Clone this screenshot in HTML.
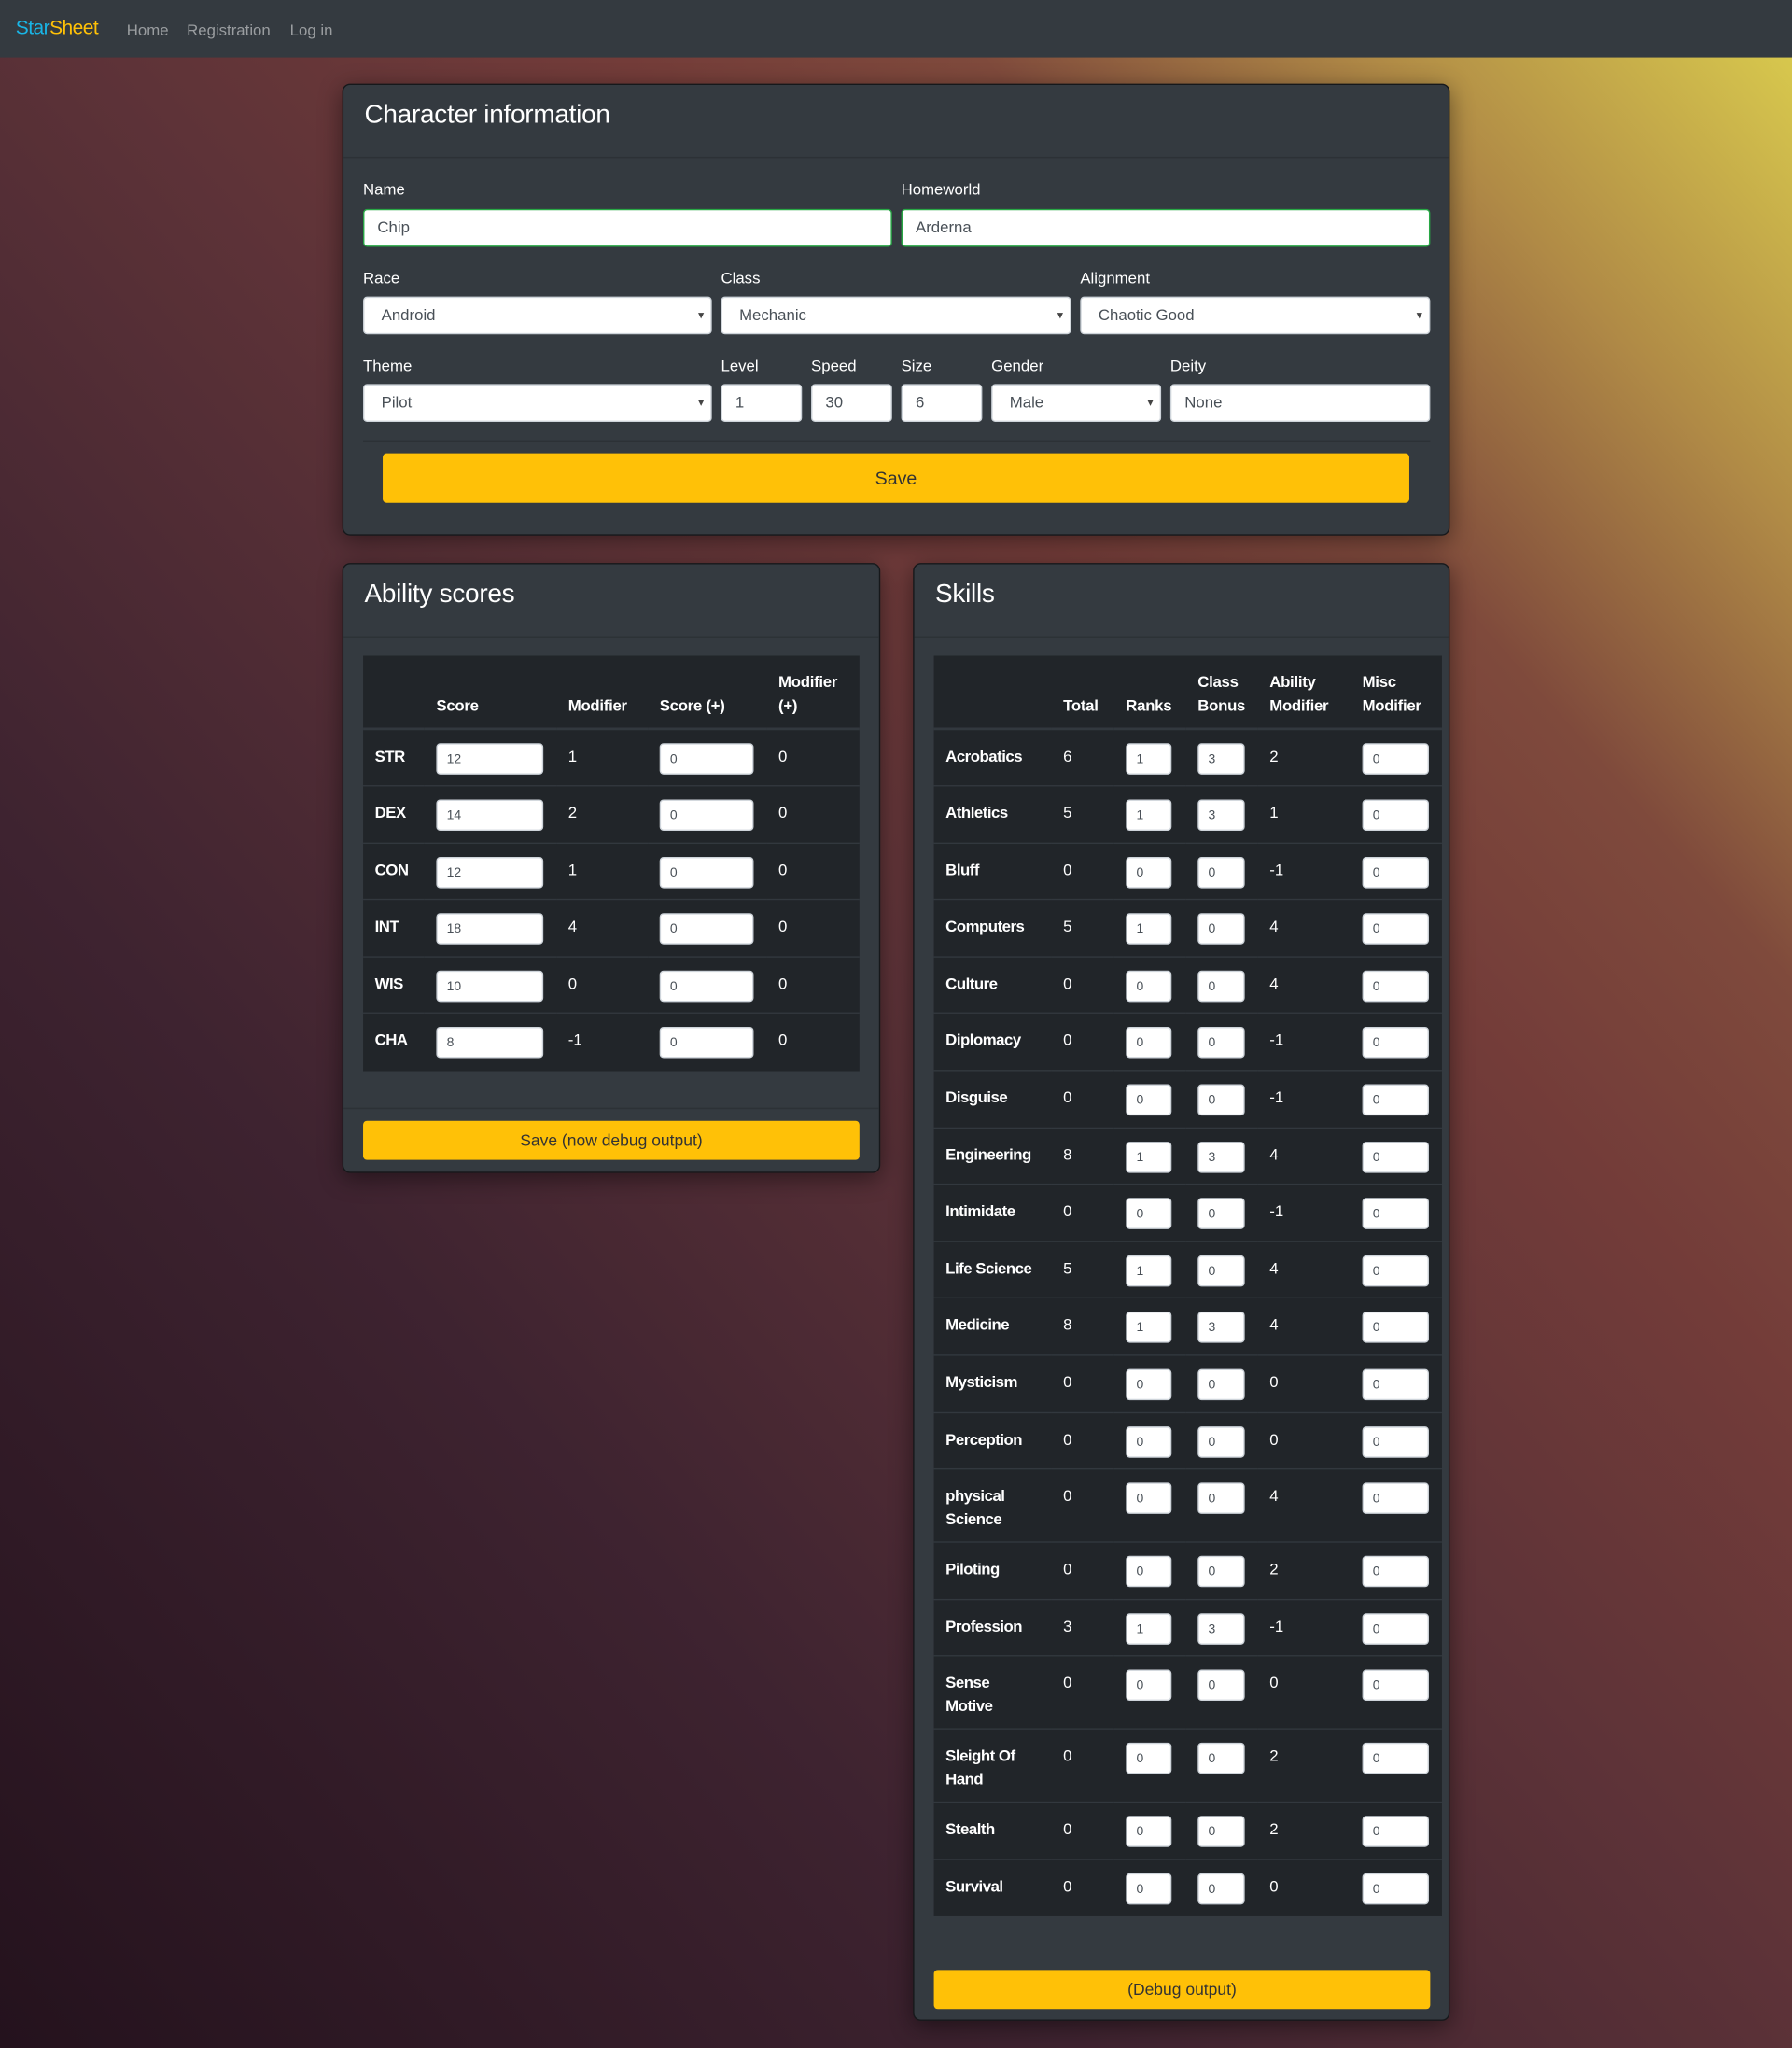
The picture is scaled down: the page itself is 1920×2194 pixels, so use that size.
<!DOCTYPE html>
<html><head><meta charset="utf-8">
<style>
html,body{margin:0;padding:0;width:1920px;height:2194px;overflow:hidden}
body{background:linear-gradient(to top right,#24121d 0%,#3e2330 30%,#5e3338 52%,#733c39 66%,#7f4a3c 76%,#b08a46 87%,#dccf4e 100%);font-family:"Liberation Sans",sans-serif}
#w{position:absolute;left:0;top:0;width:1372px;height:1568px;transform:scale(1.39942);transform-origin:0 0}
.nav{position:absolute;left:0;top:0;width:1372px;height:44px;background:#343a40}
.brand{position:absolute;left:12px;top:13px;font-size:15px;letter-spacing:-.4px}
.nl{position:absolute;top:16px;font-size:12px;color:#9a9da0}
.card{position:absolute;background:#343a40;border:1px solid #16181b;border-radius:6px;box-shadow:0 4px 18px rgba(0,0,0,.45)}
.ch{height:55px;border-bottom:1px solid #2c3136;position:relative}
.ch h2{position:absolute;left:16px;top:12px;margin:0;font-size:20px;font-weight:normal;color:#fff;letter-spacing:-.2px}
.lab{position:absolute;font-size:12px;color:#fff}
.in{position:absolute;box-sizing:border-box;background:#fff;border:1px solid #ced4da;border-radius:3px;font-size:12px;color:#495057;padding-left:10px;line-height:27px;height:29px}
.g{border-color:#28a745}
.sel{padding-left:13px}
.sel:after{content:"▾";position:absolute;right:5px;top:0;font-size:9px;color:#444}
.btn{position:absolute;background:#ffc107;border-radius:3px;color:#333;text-align:center}
table{border-collapse:collapse;table-layout:fixed;background:#212529;color:#fff;position:absolute;font-size:12px}
th{font-weight:bold;text-align:left;vertical-align:bottom;padding:0 9px 8px;line-height:18px;border-bottom:2px solid #32383e;height:46px;box-sizing:border-box;letter-spacing:-.2px}
td{vertical-align:top;padding:11px 9px 0;line-height:18px;border-top:1px solid #32383e}
td.n{font-weight:bold;padding-top:11px;letter-spacing:-.35px;padding-right:4px}
tbody tr{height:43.6px}
tbody tr.t{height:56px}
.i{display:block;box-sizing:border-box;height:24px;background:#fff;border:1px solid #ced4da;border-radius:3px;font-size:10px;color:#495057;padding-left:7px;line-height:24px;margin-top:-1px}
</style></head><body><div id="w">
<div class="nav">
<div class="brand"><span style="color:#19b5e6">Star</span><span style="color:#ffc107">Sheet</span></div>
<div class="nl" style="left:97px">Home</div><div class="nl" style="left:143px">Registration</div><div class="nl" style="left:222px">Log in</div>
</div>

<div class="card" style="left:262px;top:64px;width:846px;height:344px">
<div class="ch"><h2>Character information</h2></div>
<div class="lab" style="left:15px;top:73px">Name</div>
<div class="lab" style="left:427px;top:73px">Homeworld</div>
<div class="in g" style="left:15px;top:95px;width:405px">Chip</div>
<div class="in g" style="left:427px;top:95px;width:405px">Arderna</div>
<div class="lab" style="left:15px;top:141px">Race</div>
<div class="lab" style="left:289px;top:141px">Class</div>
<div class="lab" style="left:564px;top:141px">Alignment</div>
<div class="in sel" style="left:15px;top:162px;width:267px">Android</div>
<div class="in sel" style="left:289px;top:162px;width:268px">Mechanic</div>
<div class="in sel" style="left:564px;top:162px;width:268px">Chaotic Good</div>
<div class="lab" style="left:15px;top:208px">Theme</div>
<div class="lab" style="left:289px;top:208px">Level</div>
<div class="lab" style="left:358px;top:208px">Speed</div>
<div class="lab" style="left:427px;top:208px">Size</div>
<div class="lab" style="left:496px;top:208px">Gender</div>
<div class="lab" style="left:633px;top:208px">Deity</div>
<div class="in sel" style="left:15px;top:229px;width:267px">Pilot</div>
<div class="in" style="left:289px;top:229px;width:62px">1</div>
<div class="in" style="left:358px;top:229px;width:62px">30</div>
<div class="in" style="left:427px;top:229px;width:62px">6</div>
<div class="in sel" style="left:496px;top:229px;width:130px">Male</div>
<div class="in" style="left:633px;top:229px;width:199px">None</div>
<div style="position:absolute;left:15px;top:272px;width:817px;height:57px;border-top:1px solid #2c3136;background:#343a40"></div>
<div class="btn" style="left:30px;top:282px;width:786px;height:38px;line-height:38px;font-size:14px">Save</div>
</div>

<div class="card" style="left:262px;top:431px;width:410px;height:465px">
<div class="ch"><h2>Ability scores</h2></div>
<table style="left:15px;top:70px;width:380px">
<colgroup><col style="width:47px"><col style="width:101px"><col style="width:70px"><col style="width:91px"><col style="width:71px"></colgroup>
<thead><tr><th style="height:56px"></th><th>Score</th><th>Modifier</th><th>Score (+)</th><th>Modifier (+)</th></tr></thead>
<tbody>
<tr><td class="n">STR</td><td><span class="i" style="width:82px">12</span></td><td>1</td><td><span class="i" style="width:72px">0</span></td><td>0</td></tr>
<tr><td class="n">DEX</td><td><span class="i" style="width:82px">14</span></td><td>2</td><td><span class="i" style="width:72px">0</span></td><td>0</td></tr>
<tr><td class="n">CON</td><td><span class="i" style="width:82px">12</span></td><td>1</td><td><span class="i" style="width:72px">0</span></td><td>0</td></tr>
<tr><td class="n">INT</td><td><span class="i" style="width:82px">18</span></td><td>4</td><td><span class="i" style="width:72px">0</span></td><td>0</td></tr>
<tr><td class="n">WIS</td><td><span class="i" style="width:82px">10</span></td><td>0</td><td><span class="i" style="width:72px">0</span></td><td>0</td></tr>
<tr><td class="n">CHA</td><td><span class="i" style="width:82px">8</span></td><td>-1</td><td><span class="i" style="width:72px">0</span></td><td>0</td></tr>
</tbody></table>
<div style="position:absolute;left:0;top:416px;width:410px;border-top:1px solid #2c3136"></div>
<div class="btn" style="left:15px;top:426px;width:380px;height:30px;line-height:30px;font-size:12.5px">Save (now debug output)</div>
</div>

<div class="card" style="left:699px;top:431px;width:409px;height:1114px">
<div class="ch"><h2>Skills</h2></div>
<table style="left:15px;top:70px;width:389px">
<colgroup><col style="width:90px"><col style="width:48px"><col style="width:55px"><col style="width:55px"><col style="width:71px"><col style="width:70px"></colgroup>
<thead><tr><th style="height:56px"></th><th>Total</th><th>Ranks</th><th>Class Bonus</th><th>Ability Modifier</th><th>Misc Modifier</th></tr></thead>
<tbody>
<tr><td class="n">Acrobatics</td><td>6</td><td><span class="i" style="width:35px">1</span></td><td><span class="i" style="width:36px">3</span></td><td>2</td><td><span class="i" style="width:51px">0</span></td></tr>
<tr><td class="n">Athletics</td><td>5</td><td><span class="i" style="width:35px">1</span></td><td><span class="i" style="width:36px">3</span></td><td>1</td><td><span class="i" style="width:51px">0</span></td></tr>
<tr><td class="n">Bluff</td><td>0</td><td><span class="i" style="width:35px">0</span></td><td><span class="i" style="width:36px">0</span></td><td>-1</td><td><span class="i" style="width:51px">0</span></td></tr>
<tr><td class="n">Computers</td><td>5</td><td><span class="i" style="width:35px">1</span></td><td><span class="i" style="width:36px">0</span></td><td>4</td><td><span class="i" style="width:51px">0</span></td></tr>
<tr><td class="n">Culture</td><td>0</td><td><span class="i" style="width:35px">0</span></td><td><span class="i" style="width:36px">0</span></td><td>4</td><td><span class="i" style="width:51px">0</span></td></tr>
<tr><td class="n">Diplomacy</td><td>0</td><td><span class="i" style="width:35px">0</span></td><td><span class="i" style="width:36px">0</span></td><td>-1</td><td><span class="i" style="width:51px">0</span></td></tr>
<tr><td class="n">Disguise</td><td>0</td><td><span class="i" style="width:35px">0</span></td><td><span class="i" style="width:36px">0</span></td><td>-1</td><td><span class="i" style="width:51px">0</span></td></tr>
<tr><td class="n">Engineering</td><td>8</td><td><span class="i" style="width:35px">1</span></td><td><span class="i" style="width:36px">3</span></td><td>4</td><td><span class="i" style="width:51px">0</span></td></tr>
<tr><td class="n">Intimidate</td><td>0</td><td><span class="i" style="width:35px">0</span></td><td><span class="i" style="width:36px">0</span></td><td>-1</td><td><span class="i" style="width:51px">0</span></td></tr>
<tr><td class="n" style="white-space:nowrap">Life Science</td><td>5</td><td><span class="i" style="width:35px">1</span></td><td><span class="i" style="width:36px">0</span></td><td>4</td><td><span class="i" style="width:51px">0</span></td></tr>
<tr><td class="n">Medicine</td><td>8</td><td><span class="i" style="width:35px">1</span></td><td><span class="i" style="width:36px">3</span></td><td>4</td><td><span class="i" style="width:51px">0</span></td></tr>
<tr><td class="n">Mysticism</td><td>0</td><td><span class="i" style="width:35px">0</span></td><td><span class="i" style="width:36px">0</span></td><td>0</td><td><span class="i" style="width:51px">0</span></td></tr>
<tr><td class="n">Perception</td><td>0</td><td><span class="i" style="width:35px">0</span></td><td><span class="i" style="width:36px">0</span></td><td>0</td><td><span class="i" style="width:51px">0</span></td></tr>
<tr class="t"><td class="n">physical<br>Science</td><td>0</td><td><span class="i" style="width:35px">0</span></td><td><span class="i" style="width:36px">0</span></td><td>4</td><td><span class="i" style="width:51px">0</span></td></tr>
<tr><td class="n">Piloting</td><td>0</td><td><span class="i" style="width:35px">0</span></td><td><span class="i" style="width:36px">0</span></td><td>2</td><td><span class="i" style="width:51px">0</span></td></tr>
<tr><td class="n">Profession</td><td>3</td><td><span class="i" style="width:35px">1</span></td><td><span class="i" style="width:36px">3</span></td><td>-1</td><td><span class="i" style="width:51px">0</span></td></tr>
<tr class="t"><td class="n">Sense<br>Motive</td><td>0</td><td><span class="i" style="width:35px">0</span></td><td><span class="i" style="width:36px">0</span></td><td>0</td><td><span class="i" style="width:51px">0</span></td></tr>
<tr class="t"><td class="n">Sleight Of<br>Hand</td><td>0</td><td><span class="i" style="width:35px">0</span></td><td><span class="i" style="width:36px">0</span></td><td>2</td><td><span class="i" style="width:51px">0</span></td></tr>
<tr><td class="n">Stealth</td><td>0</td><td><span class="i" style="width:35px">0</span></td><td><span class="i" style="width:36px">0</span></td><td>2</td><td><span class="i" style="width:51px">0</span></td></tr>
<tr><td class="n">Survival</td><td>0</td><td><span class="i" style="width:35px">0</span></td><td><span class="i" style="width:36px">0</span></td><td>0</td><td><span class="i" style="width:51px">0</span></td></tr>
</tbody></table>
<div class="btn" style="left:15px;top:1076px;width:380px;height:30px;line-height:30px;font-size:12.5px">(Debug output)</div>
</div>
</div></body></html>
